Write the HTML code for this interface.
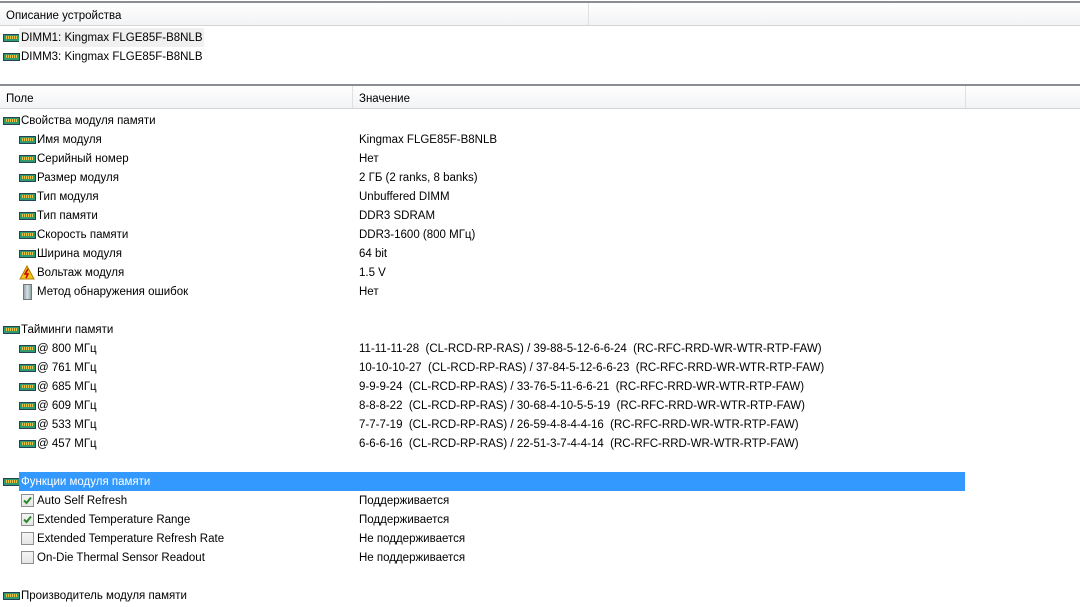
<!DOCTYPE html>
<html><head><meta charset="utf-8"><style>
body{margin:0;width:1080px;height:598px;overflow:hidden;background:#fff;font-family:"Liberation Sans",sans-serif;font-size:11.5px;color:#000;position:relative}
.abs{position:absolute}
.hdr{position:absolute;left:0;width:1080px;height:22px;background:linear-gradient(#fff,#f2f3f5);border-bottom:1px solid #d5d5d5}
.hdr span{position:absolute;top:7px}
.sep{position:absolute;top:0;width:1px;height:22px;background:#e0e0e0}
.row{position:absolute;left:0;width:1080px;height:19px;line-height:21px;white-space:nowrap}
.row .t{position:absolute}
.row .v{position:absolute;left:359px}
.ram{position:absolute;top:6px;width:15px;height:6px;background:#2f9a6e;border:1px solid #245;}
.ram:after{content:"";position:absolute;left:2px;top:1px;width:11px;height:3px;background:repeating-linear-gradient(90deg,#e8c24a 0 1px,#2f9a6e 1px 2px)}
.cb{position:absolute;top:3px;width:11px;height:11px;border:1px solid #8e8f8f;background:linear-gradient(#f4f4f4,#e6e6e6)}
</style></head><body>
<div class="abs" style="left:0;top:1px;width:1080px;height:2px;background:#8a8e92"></div>
<div class="hdr" style="top:3px"><span style="left:6px">Описание устройства</span><div class="sep" style="left:588px"></div></div>
<div class="row" style="top:28px"><div class="ram" style="left:3px"></div><div class="abs" style="left:19px;top:0;width:185px;height:19px;background:#f0f0f0"></div><span class="t" style="left:21px">DIMM1: Kingmax FLGE85F-B8NLB</span></div>
<div class="row" style="top:47px"><div class="ram" style="left:3px"></div><span class="t" style="left:21px">DIMM3: Kingmax FLGE85F-B8NLB</span></div>
<div class="abs" style="left:0;top:84px;width:1080px;height:2px;background:#8a8e92"></div>
<div class="hdr" style="top:86px"><span style="left:6px">Поле</span><div class="sep" style="left:352px"></div><span style="left:359px">Значение</span><div class="sep" style="left:965px"></div></div>

<div class="row" style="top:111px"><div class="ram" style="left:3px"></div><span class="t" style="left:21px">Свойства модуля памяти</span></div>
<div class="row" style="top:130px"><div class="ram" style="left:19px"></div><span class="t" style="left:37px">Имя модуля</span><span class="v">Kingmax FLGE85F-B8NLB</span></div>
<div class="row" style="top:149px"><div class="ram" style="left:19px"></div><span class="t" style="left:37px">Серийный номер</span><span class="v">Нет</span></div>
<div class="row" style="top:168px"><div class="ram" style="left:19px"></div><span class="t" style="left:37px">Размер модуля</span><span class="v">2 ГБ (2 ranks, 8 banks)</span></div>
<div class="row" style="top:187px"><div class="ram" style="left:19px"></div><span class="t" style="left:37px">Тип модуля</span><span class="v">Unbuffered DIMM</span></div>
<div class="row" style="top:206px"><div class="ram" style="left:19px"></div><span class="t" style="left:37px">Тип памяти</span><span class="v">DDR3 SDRAM</span></div>
<div class="row" style="top:225px"><div class="ram" style="left:19px"></div><span class="t" style="left:37px">Скорость памяти</span><span class="v">DDR3-1600 (800 МГц)</span></div>
<div class="row" style="top:244px"><div class="ram" style="left:19px"></div><span class="t" style="left:37px">Ширина модуля</span><span class="v">64 bit</span></div>
<div class="row" style="top:263px"><svg class="abs" style="left:19px;top:2px" width="16" height="15"><path d="M8 1L15 14H1Z" fill="#f5c518" stroke="#b07a00"/><path d="M9 4L6 9h3l-2 4" stroke="#c00" stroke-width="1.5" fill="none"/></svg><span class="t" style="left:37px">Вольтаж модуля</span><span class="v">1.5 V</span></div>
<div class="row" style="top:282px"><div class="abs" style="left:23px;top:2px;width:7px;height:14px;background:linear-gradient(90deg,#9aa,#dde,#8a9);border:1px solid #777"></div><span class="t" style="left:37px">Метод обнаружения ошибок</span><span class="v">Нет</span></div>

<div class="row" style="top:320px"><div class="ram" style="left:3px"></div><span class="t" style="left:21px">Тайминги памяти</span></div>
<div class="row" style="top:339px"><div class="ram" style="left:19px"></div><span class="t" style="left:37px">@ 800 МГц</span><span class="v">11-11-11-28&nbsp; (CL-RCD-RP-RAS) / 39-88-5-12-6-6-24&nbsp; (RC-RFC-RRD-WR-WTR-RTP-FAW)</span></div>
<div class="row" style="top:358px"><div class="ram" style="left:19px"></div><span class="t" style="left:37px">@ 761 МГц</span><span class="v">10-10-10-27&nbsp; (CL-RCD-RP-RAS) / 37-84-5-12-6-6-23&nbsp; (RC-RFC-RRD-WR-WTR-RTP-FAW)</span></div>
<div class="row" style="top:377px"><div class="ram" style="left:19px"></div><span class="t" style="left:37px">@ 685 МГц</span><span class="v">9-9-9-24&nbsp; (CL-RCD-RP-RAS) / 33-76-5-11-6-6-21&nbsp; (RC-RFC-RRD-WR-WTR-RTP-FAW)</span></div>
<div class="row" style="top:396px"><div class="ram" style="left:19px"></div><span class="t" style="left:37px">@ 609 МГц</span><span class="v">8-8-8-22&nbsp; (CL-RCD-RP-RAS) / 30-68-4-10-5-5-19&nbsp; (RC-RFC-RRD-WR-WTR-RTP-FAW)</span></div>
<div class="row" style="top:415px"><div class="ram" style="left:19px"></div><span class="t" style="left:37px">@ 533 МГц</span><span class="v">7-7-7-19&nbsp; (CL-RCD-RP-RAS) / 26-59-4-8-4-4-16&nbsp; (RC-RFC-RRD-WR-WTR-RTP-FAW)</span></div>
<div class="row" style="top:434px"><div class="ram" style="left:19px"></div><span class="t" style="left:37px">@ 457 МГц</span><span class="v">6-6-6-16&nbsp; (CL-RCD-RP-RAS) / 22-51-3-7-4-4-14&nbsp; (RC-RFC-RRD-WR-WTR-RTP-FAW)</span></div>

<div class="row" style="top:472px"><div class="ram" style="left:3px"></div><div class="abs" style="left:19px;top:0;width:946px;height:19px;background:#3399ff"></div><span class="t" style="left:21px;color:#fff">Функции модуля памяти</span></div>
<div class="row" style="top:491px"><div class="cb" style="left:21px"></div><svg class="abs" style="left:22px;top:4px" width="11" height="11"><path d="M2 5.5L4.5 8L9 2.5" stroke="#2a8a2a" stroke-width="2" fill="none"/></svg><span class="t" style="left:37px">Auto Self Refresh</span><span class="v">Поддерживается</span></div>
<div class="row" style="top:510px"><div class="cb" style="left:21px"></div><svg class="abs" style="left:22px;top:4px" width="11" height="11"><path d="M2 5.5L4.5 8L9 2.5" stroke="#2a8a2a" stroke-width="2" fill="none"/></svg><span class="t" style="left:37px">Extended Temperature Range</span><span class="v">Поддерживается</span></div>
<div class="row" style="top:529px"><div class="cb" style="left:21px"></div><span class="t" style="left:37px">Extended Temperature Refresh Rate</span><span class="v">Не поддерживается</span></div>
<div class="row" style="top:548px"><div class="cb" style="left:21px"></div><span class="t" style="left:37px">On-Die Thermal Sensor Readout</span><span class="v">Не поддерживается</span></div>

<div class="row" style="top:586px"><div class="ram" style="left:3px"></div><span class="t" style="left:21px">Производитель модуля памяти</span></div>
</body></html>
